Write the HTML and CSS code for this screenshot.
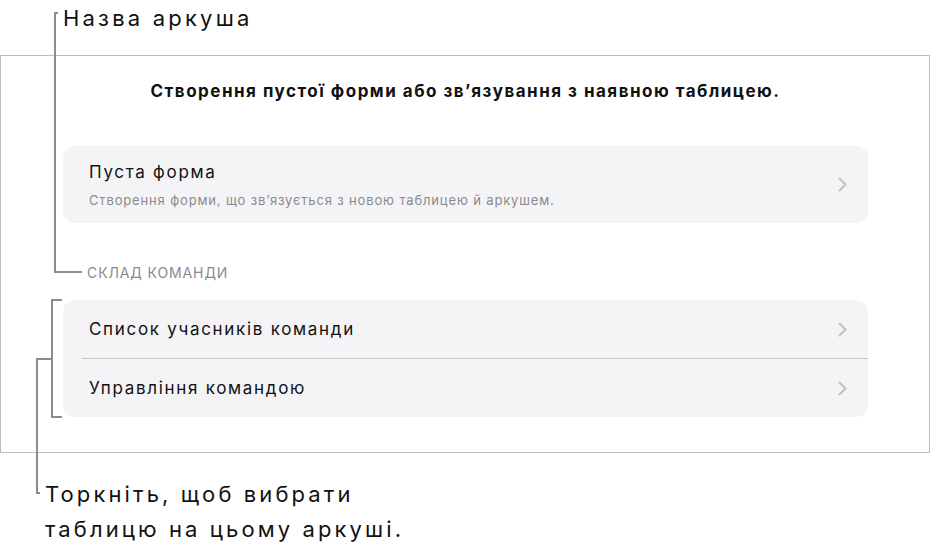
FILE: index.html
```html
<!DOCTYPE html>
<html lang="uk">
<head>
<meta charset="utf-8">
<title>Форми</title>
<link rel="stylesheet" href="styles.css">
</head>
<body>
<div class="page">
  <div class="callout-top">Назва аркуша</div>
  <div class="frame">
    <h1 class="heading">Створення пустої форми або зв’язування з наявною таблицею.</h1>
    <div class="card">
      <div class="row row-tall">
        <div class="row-text">
          <div class="row-title">Пуста форма</div>
          <div class="row-sub">Створення форми, що зв’язується з новою таблицею й аркушем.</div>
        </div>
        <svg class="chev" width="9" height="15" viewBox="0 0 9 15"><path d="M1.5 1.5 L7.5 7.5 L1.5 13.5" fill="none" stroke="#c2c2c6" stroke-width="2" stroke-linecap="round" stroke-linejoin="round"/></svg>
      </div>
    </div>
    <div class="section-label">СКЛАД КОМАНДИ</div>
    <div class="card">
      <div class="row">
        <div class="row-title">Список учасників команди</div>
        <svg class="chev" width="9" height="15" viewBox="0 0 9 15"><path d="M1.5 1.5 L7.5 7.5 L1.5 13.5" fill="none" stroke="#c2c2c6" stroke-width="2" stroke-linecap="round" stroke-linejoin="round"/></svg>
      </div>
      <div class="divider"></div>
      <div class="row">
        <div class="row-title">Управління командою</div>
        <svg class="chev" width="9" height="15" viewBox="0 0 9 15"><path d="M1.5 1.5 L7.5 7.5 L1.5 13.5" fill="none" stroke="#c2c2c6" stroke-width="2" stroke-linecap="round" stroke-linejoin="round"/></svg>
      </div>
    </div>
  </div>
  <div class="callout-bottom">Торкніть, щоб вибрати<br>таблицю на цьому аркуші.</div>
  <svg class="leaders" width="931" height="553" viewBox="0 0 931 553">
    <path d="M58 13 H55 V272 H82" fill="none" stroke="#8c8c8c" stroke-width="2"/>
    <path d="M62 300 H52 V417 H62" fill="none" stroke="#8c8c8c" stroke-width="2"/>
    <path d="M52 359 H37 V493 H40" fill="none" stroke="#8c8c8c" stroke-width="2"/>
  </svg>
</div>
</body>
</html>
```

FILE: styles.css
```css
html, body {
  margin: 0;
  padding: 0;
  background: #ffffff;
}

body {
  font-family: "Inter", "Roboto", "Noto Sans", sans-serif;
  color: #111111;
}

.page {
  position: relative;
  width: 931px;
  height: 553px;
  overflow: hidden;
}

.callout-top {
  height: 55px;
  box-sizing: border-box;
  padding: 5px 0 0 63px;
  font-size: 22px;
  line-height: 26px;
  letter-spacing: 3.2px;
  color: #111111;
}

.frame {
  width: 930px;
  box-sizing: border-box;
  border: 1px solid #bdbdbd;
  padding: 25px 61px 34px 62px;
  height: 398px;
}

.heading {
  margin: 0;
  font-size: 17px;
  line-height: 20px;
  font-weight: 700;
  text-align: center;
  color: #111111;
  letter-spacing: 1.5px;
  white-space: nowrap;
}

.card {
  background: #f4f4f6;
  border-radius: 12px;
  margin-top: 45px;
}

.row {
  display: flex;
  align-items: center;
  justify-content: space-between;
  height: 58px;
  padding: 0 21px 0 26px;
}

.row-tall {
  height: 77px;
}

.row-text {
  display: flex;
  flex-direction: column;
  gap: 8px;
}

.row-title {
  font-size: 17px;
  line-height: 22px;
  letter-spacing: 1.7px;
  color: #111111;
}

.row-sub {
  font-size: 13px;
  line-height: 18px;
  letter-spacing: 0.85px;
  color: #8a8a8e;
}

.chev {
  display: block;
  flex: none;
}

.divider {
  height: 1px;
  margin-left: 19px;
  background: #c8c8cc;
}

.section-label {
  margin: 42px 0 19px 24px;
  font-size: 14px;
  line-height: 16px;
  letter-spacing: 0.9px;
  color: #8a8a8e;
}

.section-label + .card {
  margin-top: 0;
}

.callout-bottom {
  padding: 24px 0 0 45px;
  font-size: 22px;
  line-height: 35px;
  letter-spacing: 3.1px;
  color: #111111;
}

.leaders {
  position: absolute;
  left: 0;
  top: 0;
  pointer-events: none;
}
```
